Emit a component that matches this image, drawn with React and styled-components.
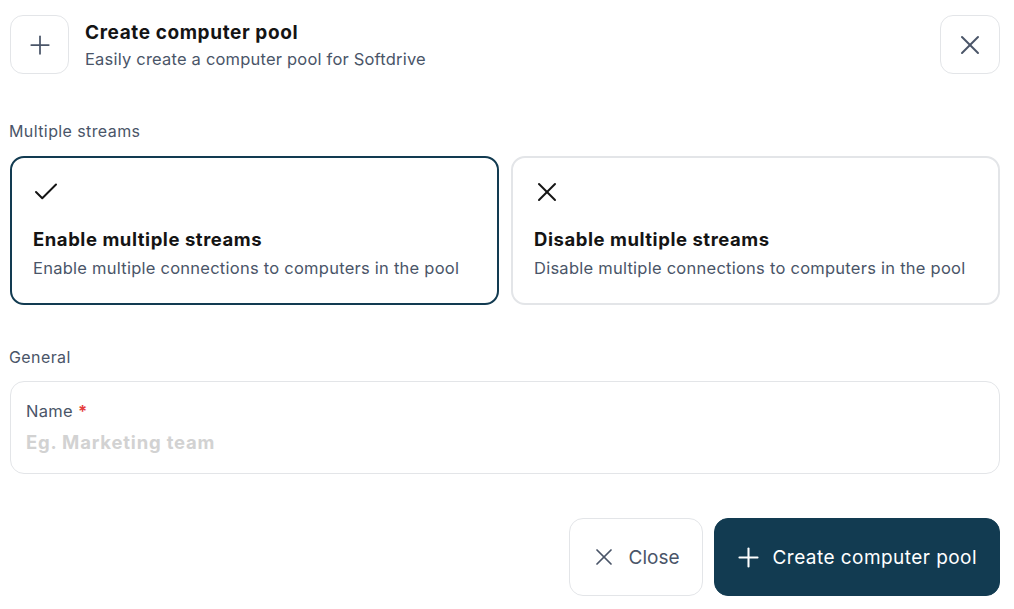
import React from 'react';
import styled, { createGlobalStyle } from 'styled-components';
import { Plus, X, Check } from 'lucide-react';

// --- Colors ---
const NAVY = '#123b51';
const INK = '#141414';
const SLATE = '#4a5568';
const BORDER = '#e3e5e8';
const PLACEHOLDER = '#d2d2d2';

const GlobalStyle = createGlobalStyle`
  body {
    margin: 0;
    background: #ffffff;
    font-family: Inter, "Noto Sans", sans-serif;
  }
`;

const Dialog = styled.div`
  width: 990px;
  margin-left: 10px;
  padding-top: 15px;
  box-sizing: border-box;
`;

const Header = styled.div`
  display: flex;
  align-items: flex-start;
  gap: 16px;
`;

const IconBox = styled.button`
  width: ${p => p.$w || 59}px;
  height: 59px;
  flex-shrink: 0;
  border: 1px solid ${BORDER};
  border-radius: 13px;
  background: #fff;
  display: flex;
  align-items: center;
  justify-content: center;
  color: ${SLATE};
  padding: 0;
`;

const HeaderText = styled.div`
  flex: 1;
  padding-top: 5px;
`;

const Title = styled.div`
  font-size: 19px;
  font-weight: 700;
  color: ${INK};
  line-height: 26px;
  letter-spacing: 0.6px;
`;

const Subtitle = styled.div`
  font-size: 16.5px;
  color: ${SLATE};
  line-height: 22px;
  margin-top: 2px;
  letter-spacing: 0.2px;
`;

const SectionLabel = styled.div`
  font-size: 16px;
  color: ${SLATE};
  line-height: 20px;
  letter-spacing: 0.4px;
  margin: ${p => p.$mt}px 0 ${p => p.$mb}px -1px;
`;

const CardGrid = styled.div`
  display: grid;
  grid-template-columns: 1fr 1fr;
  gap: 12px;
`;

const Card = styled.div`
  border: 2px solid ${p => (p.$active ? NAVY : BORDER)};
  border-radius: 14px;
  padding: 24px 21px 23px;
  height: 149px;
  box-sizing: border-box;
  color: ${INK};
`;

const CardIcon = styled.div`
  height: 20px;
  display: flex;
  align-items: center;

  svg {
    margin-left: ${p => p.$ml}px;
  }
`;

const CardTitle = styled.div`
  font-size: 18.5px;
  font-weight: 700;
  line-height: 24px;
  letter-spacing: 0.55px;
  margin-top: 25px;
`;

const CardDesc = styled.div`
  font-size: 16.5px;
  color: ${SLATE};
  line-height: 22px;
  letter-spacing: 0.25px;
  margin-top: 6px;
`;

const Field = styled.div`
  border: 1px solid ${BORDER};
  border-radius: 14px;
  height: 93px;
  box-sizing: border-box;
  padding: 18px 15px;
`;

const FieldLabel = styled.div`
  font-size: 16.5px;
  color: ${SLATE};
  line-height: 22px;
  letter-spacing: 0.3px;

  span {
    color: #e53e3e;
    font-weight: 700;
  }
`;

const FieldInput = styled.input`
  display: block;
  width: 100%;
  border: none;
  outline: none;
  padding: 0;
  margin-top: 8px;
  font-family: inherit;
  font-size: 18.5px;
  font-weight: 700;
  line-height: 24px;
  letter-spacing: 0.8px;
  color: ${INK};

  &::placeholder {
    color: ${PLACEHOLDER};
  }
`;

const Footer = styled.div`
  display: flex;
  justify-content: flex-end;
  gap: 11px;
  margin-top: 44px;
`;

const Button = styled.button`
  height: 78px;
  border-radius: 14px;
  display: flex;
  align-items: center;
  gap: ${p => (p.$primary ? 9 : 11)}px;
  padding: 0 ${p => p.$pr}px 0 ${p => p.$pl}px;
  font-family: inherit;
  font-size: 19px;
  letter-spacing: ${p => (p.$primary ? 0.45 : 0)}px;
  border: 1px solid ${p => (p.$primary ? NAVY : BORDER)};
  background: ${p => (p.$primary ? NAVY : '#fff')};
  color: ${p => (p.$primary ? '#fff' : SLATE)};
`;

const options = [
  {
    active: true,
    icon: <Check size={30} strokeWidth={1.6} />,
    ml: -2,
    title: 'Enable multiple streams',
    desc: 'Enable multiple connections to computers in the pool',
  },
  {
    active: false,
    icon: <X size={32} strokeWidth={1.5} />,
    ml: -3,
    title: 'Disable multiple streams',
    desc: 'Disable multiple connections to computers in the pool',
  },
];

export default function App() {
  return (
    <>
      <GlobalStyle />
      <Dialog>
        <Header>
          <IconBox>
            <Plus size={30} strokeWidth={1.4} />
          </IconBox>
          <HeaderText>
            <Title>Create computer pool</Title>
            <Subtitle>Easily create a computer pool for Softdrive</Subtitle>
          </HeaderText>
          <IconBox $w={60}>
            <X size={32} strokeWidth={1.5} />
          </IconBox>
        </Header>

        <SectionLabel $mt={47} $mb={15}>Multiple streams</SectionLabel>
        <CardGrid>
          {options.map((o, i) => (
            <Card key={i} $active={o.active}>
              <CardIcon $ml={o.ml}>{o.icon}</CardIcon>
              <CardTitle>{o.title}</CardTitle>
              <CardDesc>{o.desc}</CardDesc>
            </Card>
          ))}
        </CardGrid>

        <SectionLabel $mt={42} $mb={14}>General</SectionLabel>
        <Field>
          <FieldLabel>
            Name <span>*</span>
          </FieldLabel>
          <FieldInput placeholder="Eg. Marketing team" />
        </Field>

        <Footer>
          <Button $pl={20} $pr={22}>
            <X size={28} strokeWidth={1.5} />
            Close
          </Button>
          <Button $primary $pl={18} $pr={22}>
            <Plus size={31} strokeWidth={1.6} />
            Create computer pool
          </Button>
        </Footer>
      </Dialog>
    </>
  );
}
